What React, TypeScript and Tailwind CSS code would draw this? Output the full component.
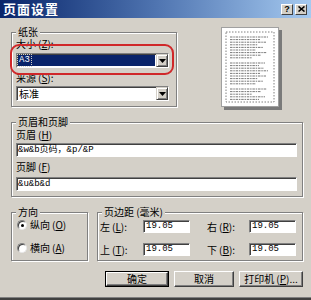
import React from "react";

const CJK = "font-['Noto_Sans_CJK_SC','Noto_Sans',sans-serif]";
const MONO = "font-['Liberation_Mono','Noto_Sans_CJK_SC',monospace]";

function Acc({ k }: { k: string }) {
  return (
    <span className="ml-[2px]">
      (<span className="underline">{k}</span>)
    </span>
  );
}

function Group({
  label,
  className,
  children,
}: {
  label: string;
  className: string;
  children?: React.ReactNode;
}) {
  return (
    <div
      className={
        "relative border border-[#808080] shadow-[inset_1px_1px_0_#fff,1px_1px_0_#fff] " +
        className
      }
    >
      <span className="absolute -top-[7px] left-[4px] bg-[#d4d0c8] px-[2px] text-[10px] leading-[11px] text-black">
        {label}
      </span>
      {children}
    </div>
  );
}

function DropBtn() {
  return (
    <div className="w-[12px] h-full bg-[#d4d0c8] border border-t-[#d4d0c8] border-l-[#d4d0c8] border-b-[#404040] border-r-[#404040] shadow-[inset_1px_1px_0_#fff,inset_-1px_-1px_0_#808080] flex items-center justify-center">
      <svg width="7" height="4" viewBox="0 0 7 4">
        <path d="M0 0H7L3.5 4Z" fill="#000" />
      </svg>
    </div>
  );
}

function Sunken({
  className,
  children,
}: {
  className: string;
  children?: React.ReactNode;
}) {
  return (
    <div
      className={
        "border border-t-[#808080] border-l-[#808080] border-b-white border-r-white shadow-[inset_1px_1px_0_#404040] bg-white " +
        className
      }
    >
      {children}
    </div>
  );
}

function Radio({ checked }: { checked?: boolean }) {
  return (
    <div className="w-[10px] h-[10px] rounded-full bg-white border border-t-[#808080] border-l-[#808080] border-b-[#e8e8e8] border-r-[#e8e8e8] shadow-[inset_1px_1px_0_#404040] flex items-center justify-center">
      {checked && <div className="w-[3px] h-[3px] rounded-full bg-black" />}
    </div>
  );
}

function Preview() {
  const groups = [
    { y: 9, n: 9 },
    { y: 35, n: 9 },
    { y: 61, n: 5 },
  ];
  const lens = [38, 30, 36, 28, 33, 26, 37, 31, 22, 35, 29, 34];
  const lines: React.ReactNode[] = [];
  let idx = 0;
  groups.forEach((g) => {
    for (let i = 0; i < g.n; i++) {
      const len = lens[idx % lens.length];
      idx++;
      lines.push(
        <line
          key={idx}
          x1={8}
          x2={8 + len}
          y1={g.y + i * 2.6}
          y2={g.y + i * 2.6}
          stroke="#6a6a6a"
          strokeWidth={0.9}
          strokeDasharray="2.5 0.8 1.5 0.8"
        />
      );
    }
  });
  return (
    <div className="w-[58px] h-[80px] bg-white border border-[#a0a0a0] shadow-[3px_3px_0_#7a7a7a]">
      <svg width="56" height="78" viewBox="0 0 56 78">
        <rect
          x={4}
          y={4}
          width={48}
          height={70}
          fill="none"
          stroke="#606060"
          strokeWidth={0.8}
          strokeDasharray="1.5 1.5"
        />
        {lines}
      </svg>
    </div>
  );
}

function Btn({
  w,
  def,
  children,
}: {
  w: string;
  def?: boolean;
  children: React.ReactNode;
}) {
  return (
    <div
      className={
        w +
        " h-[16px] " +
        (def ? "border border-black p-0" : "") +
        " flex"
      }
    >
      <div className="flex-1 flex items-center justify-center bg-[#d4d0c8] border border-t-white border-l-white border-b-[#404040] border-r-[#404040] shadow-[inset_-1px_-1px_0_#808080] text-[10px] leading-[12px] text-black">
        {children}
      </div>
    </div>
  );
}

export default function App() {
  return (
    <div
      className={
        "w-[311px] h-[300px] bg-[#d4d0c8] flex flex-col overflow-hidden text-black " +
        CJK
      }
    >
      {/* title bar */}
      <div className="h-[18px] flex items-center justify-between pl-[3px] pr-[4px] bg-gradient-to-r from-[#0a246a] via-[#4f74b0] to-[#a6caf0]">
        <span className="text-white font-bold text-[13px] leading-[16px] tracking-[1px]">
          页面设置
        </span>
        <div className="flex gap-[2px]">
          <div className="w-[12px] h-[11px] bg-[#d4d0c8] border border-t-white border-l-white border-b-[#404040] border-r-[#404040] flex items-center justify-center text-[9px] font-bold leading-none font-['Liberation_Sans',sans-serif]">
            ?
          </div>
          <div className="w-[12px] h-[11px] bg-[#d4d0c8] border border-t-white border-l-white border-b-[#404040] border-r-[#404040] flex items-center justify-center">
            <svg width="7" height="6" viewBox="0 0 7 6">
              <path d="M0.5 0.5L6.5 5.5M6.5 0.5L0.5 5.5" stroke="#000" strokeWidth="1.6" />
            </svg>
          </div>
        </div>
      </div>

      <div className="flex flex-col pl-[11px] pr-[8px]">
        {/* row 1 */}
        <div className="flex items-start mt-[9px]">
          <Group label="纸张" className="w-[166px] mt-[5px] pt-[5px] pl-[4px] pb-[5px]">
            <div className="text-[10px] leading-[12px]">
              大小<Acc k="Z" />:
            </div>
            <Sunken className="mt-[3px] w-[153px] h-[15px] flex items-stretch">
              <div className="flex-1 m-[1px] bg-[#0a246a] flex items-center">
                <span className={"text-white text-[9px] leading-[11px] px-[1px] outline outline-1 outline-dotted outline-[#d4d0c8] " + MONO}>
                  A3
                </span>
              </div>
              <DropBtn />
            </Sunken>
            <div className="text-[10px] leading-[12px] mt-[4px]">
              来源<Acc k="S" />:
            </div>
            <Sunken className="mt-[2px] w-[153px] h-[15px] flex items-stretch">
              <div className="flex-1 flex items-center pl-[2px] text-[10px] leading-[12px]">
                标准
              </div>
              <DropBtn />
            </Sunken>
            <div className="absolute left-[-2px] top-[11px] w-[164px] h-[31px] border-2 border-[#d0282a] rounded-[9px]" />
          </Group>
          <div className="ml-[44px]">
            <Preview />
          </div>
        </div>

        {/* header / footer */}
        <Group label="页眉和页脚" className="mt-[15px] w-[292px] pt-[6px] pl-[4px] pb-[5px]">
          <div className="text-[10px] leading-[12px]">
            页眉<Acc k="H" />
          </div>
          <Sunken className="mt-[2px] w-[281px] h-[14px] flex items-center pl-[1px]">
            <span className={"text-[9px] leading-[11px] " + MONO}>&amp;w&amp;b页码，&amp;p/&amp;P</span>
          </Sunken>
          <div className="text-[10px] leading-[12px] mt-[4px]">
            页脚<Acc k="F" />
          </div>
          <Sunken className="mt-[4px] w-[281px] h-[14px] flex items-center pl-[1px]">
            <span className={"text-[9px] leading-[11px] " + MONO}>&amp;u&amp;b&amp;d</span>
          </Sunken>
        </Group>

        {/* bottom row */}
        <div className="flex mt-[15px] gap-[9px]">
          <Group label="方向" className="w-[77px] pt-[6px] pb-[6px] pl-[5px] flex flex-col gap-[11px]">
            <div className="flex items-center h-[12px] gap-[3px]">
              <Radio checked />
              <span className="text-[10px] leading-[12px]">
                纵向<Acc k="O" />
              </span>
            </div>
            <div className="flex items-center h-[12px] gap-[3px]">
              <Radio />
              <span className="text-[10px] leading-[12px]">
                横向<Acc k="A" />
              </span>
            </div>
          </Group>
          <Group label="页边距 (毫米)" className="w-[206px] pt-[7px] pb-[4px] pl-[2px] flex flex-col gap-[10px]">
            {[
              ["左", "L", "右", "R"],
              ["上", "T", "下", "B"],
            ].map((r) => (
              <div key={r[0]} className="flex items-center h-[13px]">
                <span className="w-[43px] text-[10px] leading-[12px]">
                  {r[0]}
                  <Acc k={r[1]} />:
                </span>
                <Sunken className="w-[47px] h-[13px] flex items-center pl-[2px]">
                  <span className={"text-[9px] leading-[11px] " + MONO}>19.05</span>
                </Sunken>
                <span className="ml-[17px] w-[42px] text-[10px] leading-[12px]">
                  {r[2]}
                  <Acc k={r[3]} />:
                </span>
                <Sunken className="w-[47px] h-[13px] flex items-center pl-[2px]">
                  <span className={"text-[9px] leading-[11px] " + MONO}>19.05</span>
                </Sunken>
              </div>
            ))}
          </Group>
        </div>

        {/* buttons */}
        <div className="flex justify-end mt-[10px] gap-[5px]">
          <Btn w="w-[64px]" def>
            确定
          </Btn>
          <Btn w="w-[60px]">取消</Btn>
          <Btn w="w-[64px]">
            打印机<Acc k="P" />...
          </Btn>
        </div>
      </div>
      <div className="mt-auto h-[3px] border-t border-[#808080] bg-[#404040]" />
    </div>
  );
}
